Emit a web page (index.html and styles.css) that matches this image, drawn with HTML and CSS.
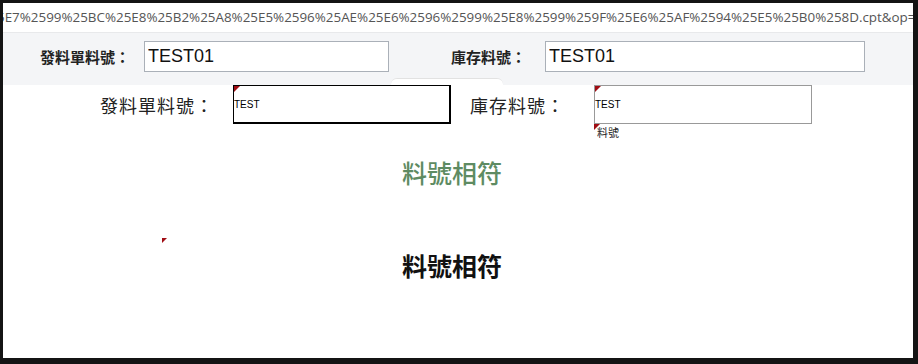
FILE: index.html
```html
<!DOCTYPE html>
<html lang="zh-Hant">
<head>
    <meta charset="UTF-8">
    <title>料號比對</title>
    <link rel="stylesheet" href="styles.css">
</head>
<body>
    <div class="frame">
        <!-- address bar -->
        <div class="urlbar"><span class="url">5E7%2599%25BC%25E8%25B2%25A8%25E5%2596%25AE%25E6%2596%2599%25E8%2599%259F%25E6%25AF%2594%25E5%25B0%258D.cpt&amp;op=</span></div>
        <!-- parameter pane -->
        <div class="toolbar">
            <label class="param-label first">發料單料號：</label>
            <input class="param-input wide" type="text" value="TEST01">
            <label class="param-label second">庫存料號：</label>
            <input class="param-input wider" type="text" value="TEST01">
            <span class="tab"></span>
        </div>
        <!-- report -->
        <div class="report">
            <div class="row">
                <span class="cell-label first">發料單料號：</span>
                <div class="cell-box active"><i class="mark"></i>TEST</div>
                <span class="cell-label second">庫存料號：</span>
                <div class="cell-box"><i class="mark"></i>TEST</div>
            </div>
            <div class="note"><i class="mark"></i>料號</div>
            <div class="result green">料號相符</div>
            <div class="mark-row"><i class="mark"></i></div>
            <div class="result bold">料號相符</div>
        </div>
    </div>
</body>
</html>
```

FILE: styles.css
```css
html, body {
    margin: 0;
    padding: 0;
    background: #141414;
    height: 364px;
    overflow: hidden;
}
.frame {
    margin: 3px 0 0 3px;
    width: 910px;
    height: 355px;
    background: #fff;
    overflow: hidden;
    font-family: "Liberation Sans", "Noto Sans CJK TC", sans-serif;
}
.urlbar {
    height: 29px;
    line-height: 29px;
    white-space: nowrap;
    overflow: hidden;
    font-family: "Open Sans", "Noto Sans", sans-serif;
    font-size: 13.4px;
    color: #555;
}
.url {
    display: inline-block;
    margin-left: -6px;
}
.toolbar {
    position: relative;
    height: 53px;
    background: #f4f5f7;
    border-top: 1px solid #e8e9eb;
    box-sizing: border-box;
    display: flex;
    align-items: flex-start;
    padding-top: 8px;
}
.param-label {
    font-family: "Noto Sans CJK TC", sans-serif;
    font-weight: 700;
    font-size: 15px;
    color: #222;
    line-height: 31px;
    flex-shrink: 0;
}
.param-label.first {
    margin-left: 37px;
    width: 104px;
}
.param-label.second {
    margin-left: 62px;
    width: 94px;
}
.param-input {
    height: 31px;
    box-sizing: border-box;
    border: 1px solid #aab0b8;
    background: #fff;
    padding: 0 3px;
    font-family: "Liberation Sans", sans-serif;
    font-size: 18px;
    color: #111;
    outline: none;
    flex-shrink: 0;
}
.param-input.wide {
    width: 245px;
}
.param-input.wider {
    width: 320px;
}
.tab {
    position: absolute;
    left: 388px;
    bottom: 0;
    width: 112px;
    height: 6px;
    background: #fff;
    border-top: 1px solid #e2e2e2;
    border-radius: 6px 6px 0 0;
}
.report {
    position: relative;
}
.row {
    display: flex;
    align-items: center;
    height: 39px;
}
.cell-label {
    font-family: "Noto Sans CJK TC", sans-serif;
    font-size: 18px;
    color: #222;
    letter-spacing: 1px;
    flex-shrink: 0;
    white-space: nowrap;
}
.cell-label.first {
    margin-left: 97px;
    width: 133px;
}
.cell-label.second {
    margin-left: 19px;
    width: 124px;
}
.cell-box {
    position: relative;
    flex-shrink: 0;
    width: 218px;
    height: 39px;
    box-sizing: border-box;
    border: 1px solid #999;
    font-family: "Liberation Sans", sans-serif;
    font-size: 10px;
    line-height: 38px;
    color: #000;
}
.cell-box.active {
    border: 1px solid #000;
    border-right-width: 2px;
    border-bottom-width: 2px;
}
.mark {
    position: absolute;
    left: 0;
    top: 0;
    width: 0;
    height: 0;
    border-top: 6px solid #a00d14;
    border-right: 6px solid transparent;
}
.note {
    position: relative;
    margin-left: 591px;
    height: 16px;
    padding-left: 3px;
    font-family: "Noto Sans CJK TC", sans-serif;
    font-size: 11px;
    line-height: 17px;
    color: #222;
}
.result {
    text-align: center;
    font-family: "Noto Sans CJK TC", sans-serif;
    font-size: 25px;
    padding-right: 12px;
}
.result.green {
    margin-top: 15px;
    color: #5e8b62;
    font-weight: 500;
    line-height: 34px;
}
.mark-row {
    position: relative;
    margin-top: 49px;
    margin-left: 159px;
    height: 6px;
}
.mark-row .mark {
    border-top-width: 5px;
    border-right-width: 5px;
}
.result.bold {
    margin-top: 4px;
    color: #111;
    font-weight: 700;
    line-height: 34px;
}
```
